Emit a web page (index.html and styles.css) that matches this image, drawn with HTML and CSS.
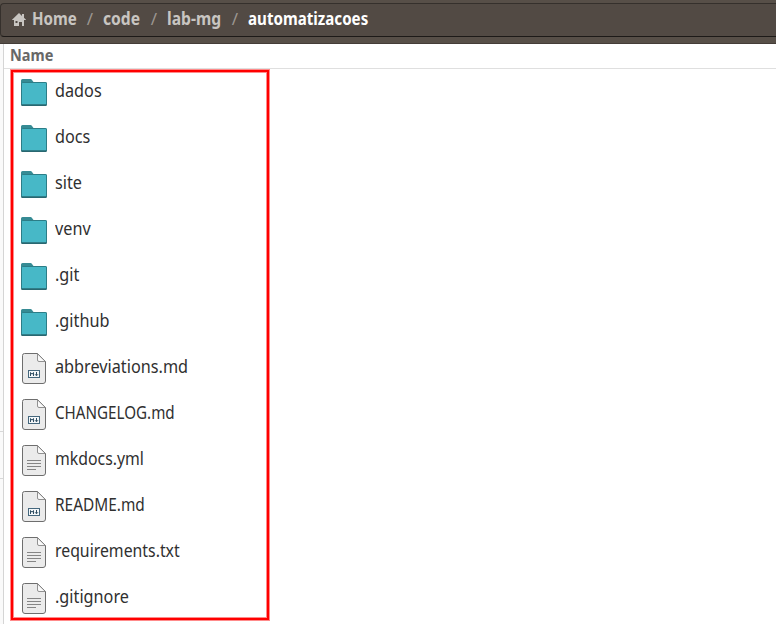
FILE: index.html
```html
<!DOCTYPE html>
<html lang="pt">
<head>
<meta charset="utf-8">
<title>automatizacoes</title>
<link rel="stylesheet" href="styles.css">
</head>
<body>
<svg class="defs" aria-hidden="true">
  <symbol id="folder" viewBox="0 0 26 28">
    <path d="M0 9V2.5Q0 1 1.5 1H9.5Q10.5 1 11 2L12.5 4H24.5Q26 4 26 5.5V9Z" fill="#368b94"/>
    <rect y="5" width="26" height="23" rx="1.5" fill="#286169"/>
    <rect x=".5" y="4.5" width="25" height="22.5" rx="1.2" fill="#47b8c7" stroke="#2c7d87"/>
    <path d="M1 27H25" stroke="#286169"/>
  </symbol>
  <symbol id="page" viewBox="0 0 24 31">
    <path d="M2.5 .5H15.5L23.5 8.5V28Q23.5 30.5 21 30.5H3Q.5 30.5 .5 28V2.5Q.5 .5 2.5 .5Z" fill="#ebebeb" stroke="#6e6e6e"/>
    <path d="M15.5 .8V7Q15.5 8.5 17 8.5H23.3Z" fill="#fafafa" stroke="#777" stroke-width=".8"/>
  </symbol>
  <symbol id="text" viewBox="0 0 24 31">
    <use href="#page"/>
    <path d="M5 15.5H19M5 18.5H19M5 21.5H19M5 24.5H14" stroke="#858585"/>
  </symbol>
  <symbol id="markdown" viewBox="0 0 24 31">
    <use href="#page"/>
    <rect x="6.5" y="17.5" width="11" height="7" fill="#f5f8fa" stroke="#45677d"/>
    <path d="M8.5 23V19.5L10 21.2L11.5 19.5V23M14.5 19V22.5M13 21.2L14.5 22.8L16 21.2" fill="none" stroke="#304f64"/>
  </symbol>
</svg>
<header class="toolbar">
  <nav class="path">
    <svg class="home" viewBox="0 0 14 13"><path fill-rule="evenodd" d="M7 0L0 6.7V7H2V13H7V9H10V13H12V7H14V6.7L12 4.8V1H10V2.9ZM3.5 8H5.5V10H3.5Z" fill="#c8c5c1"/></svg>
    <span class="crumb home-label"><b>Home</b></span><span class="slash">/</span>
    <span class="crumb code"><b>code</b></span><span class="slash">/</span>
    <span class="crumb lab"><b>lab-mg</b></span><span class="slash">/</span>
    <span class="crumb current"><b>automatizacoes</b></span>
  </nav>
</header>
<main class="window">
  <aside class="sidebar"><i></i></aside>
  <section class="listing">
    <div class="heading"><b>Name</b></div>
    <ul class="files">
      <li><svg class="folder"><use href="#folder"/></svg><span>dados</span></li>
      <li><svg class="folder"><use href="#folder"/></svg><span>docs</span></li>
      <li><svg class="folder"><use href="#folder"/></svg><span>site</span></li>
      <li><svg class="folder"><use href="#folder"/></svg><span>venv</span></li>
      <li><svg class="folder"><use href="#folder"/></svg><span>.git</span></li>
      <li><svg class="folder"><use href="#folder"/></svg><span>.github</span></li>
      <li><svg class="file"><use href="#markdown"/></svg><span>abbreviations.md</span></li>
      <li><svg class="file"><use href="#markdown"/></svg><span class="caps">CHANGELOG.md</span></li>
      <li><svg class="file"><use href="#text"/></svg><span class="tight">mkdocs.yml</span></li>
      <li><svg class="file"><use href="#markdown"/></svg><span class="readme">README.md</span></li>
      <li><svg class="file"><use href="#text"/></svg><span class="tight">requirements.txt</span></li>
      <li><svg class="file"><use href="#text"/></svg><span>.gitignore</span></li>
    </ul>
  </section>
</main>
</body>
</html>
```
FILE: styles.css
```css
* { box-sizing: border-box; }
body {
  margin: 0;
  width: 776px;
  height: 624px;
  overflow: hidden;
  background: #fff;
  font-family: "Noto Sans", sans-serif;
}
.defs { display: none; }
.toolbar {
  height: 44px;
  padding-top: 3px;
  background: #574f48;
  border-bottom: 1px solid #443d38;
}
.path {
  display: flex;
  align-items: center;
  height: 34px;
  padding: 0 0 2px 11px;
  background: #524a44;
  border: 1px solid #35302c;
  border-bottom-color: #1d1a18;
  border-right: 0;
  border-radius: 4px 0 0 4px;
  color: #c8c5c1;
  font-size: 17px;
  line-height: 30px;
}
.home { width: 14px; height: 13px; margin: 1px 6px 0 0; flex: none; }
.crumb { flex: none; white-space: nowrap; }
.crumb b, .heading b { display: inline-block; transform-origin: left; transform: scaleX(.89); }
.home-label { width: 45px; }
.code { width: 38px; }
.code b { transform: scaleX(.92); }
.lab { width: 55px; }
.lab b { transform: scaleX(.92); }
.current { color: #fff; }
.slash { width: 26px; text-align: center; color: #9c9691; flex: none; }
.window { display: flex; height: 580px; }
.sidebar { width: 4px; padding-top: 387px; background: #fafafa; border-right: 1px solid #d5d5d5; }
.sidebar i { display: block; height: 48px; border: solid #d8d8d8; border-width: 1px 0; }
.listing { flex: 1; }
.heading {
  height: 25px;
  padding-left: 6px;
  border-bottom: 1px solid #dfdfdf;
  color: #686868;
  font-size: 16.5px;
  line-height: 21px;
}
.heading b { transform: scaleX(.88); }
.files {
  width: 258px;
  height: 550px;
  margin: 1px 0 0 7px;
  padding: 0;
  list-style: none;
  border: 2px solid #f00;
  box-shadow: 0 0 0 1px #ff8b8b, inset 0 0 0 1px #ff8b8b;
}
.files li {
  display: flex;
  align-items: center;
  height: 46px;
  padding-left: 8px;
  color: #303030;
  font-size: 17.5px;
  line-height: 24px;
}
.files li:first-child { margin-top: -4px; }
.files svg { flex: none; }
.folder { width: 26px; height: 28px; margin: 2px 8px 0 0; }
.file { width: 24px; height: 31px; margin: 2px 9px 0 1px; }
.files span { margin-bottom: 2px; transform-origin: left; transform: scaleX(.928); }
.files .tight { transform: scaleX(.904); }
.files .caps { transform: scaleX(.867); }
.files .readme { transform: scaleX(.88); }
```
